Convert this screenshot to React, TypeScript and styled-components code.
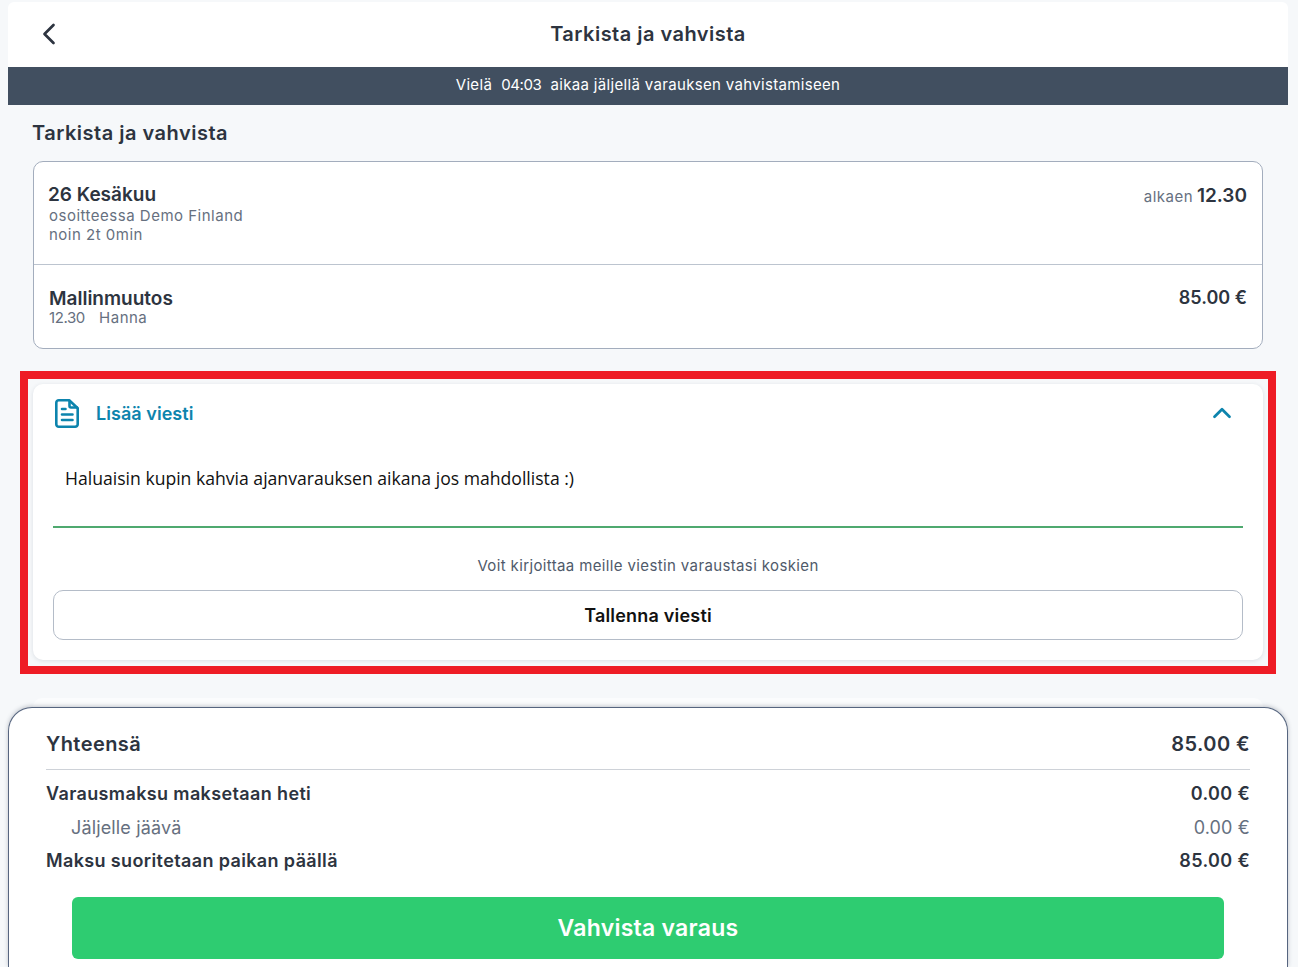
import styled, { createGlobalStyle } from 'styled-components';
import { ChevronLeft, ChevronUp } from 'lucide-react';

const GlobalStyle = createGlobalStyle`
    html, body {
        margin: 0;
        padding: 0;
        height: 967px;
        overflow: hidden;
        background: #f6f8fa;
    }
    body {
        font-family: 'Inter', 'Liberation Sans', sans-serif;
        color: #2d3440;
    }
    * {
        box-sizing: border-box;
    }
`;

const DocIcon = () => (
    <svg width="24" height="29" viewBox="0 0 24 29" fill="none" stroke="#0d84ad" strokeWidth="2.6" strokeLinejoin="round" strokeLinecap="round">
        <path d="M3.8 1.3h10.4l8.5 8v15.9a2.5 2.5 0 0 1-2.5 2.5H3.8a2.5 2.5 0 0 1-2.5-2.5V3.8a2.5 2.5 0 0 1 2.5-2.5z" />
        <path d="M14.5 2v5a1.5 1.5 0 0 0 1.5 1.5h6" />
        <path d="M7 10h3.5M7 15.5h10.5M7 21h10.5" />
    </svg>
);

export default function App() {
    return (
        <Page>
            <GlobalStyle />
            <TopBar>
                <BackButton>
                    <ChevronLeft size={36} strokeWidth={1.8} />
                </BackButton>
                <TopTitle>Tarkista ja vahvista</TopTitle>
            </TopBar>
            <TimerBanner>
                Vielä&nbsp; <Digits>04:03</Digits>&nbsp; aikaa jäljellä varauksen vahvistamiseen
            </TimerBanner>

            <Content>
                <SectionTitle>Tarkista ja vahvista</SectionTitle>
                <SummaryCard>
                    <SummaryRow $height={102} $pad={2}>
                        <div>
                            <DateLine>26 Kesäkuu</DateLine>
                            <Muted>osoitteessa Demo Finland</Muted>
                            <Muted>noin 2t 0min</Muted>
                        </div>
                        <StartTime>
                            <small>alkaen</small> 12.30
                        </StartTime>
                    </SummaryRow>
                    <SummaryRow $height={84} $pad={2}>
                        <div>
                            <ServiceName>Mallinmuutos</ServiceName>
                            <Muted>
                                <Digits>12.30</Digits> &nbsp; Hanna
                            </Muted>
                        </div>
                        <Price>85.00 €</Price>
                    </SummaryRow>
                </SummaryCard>
            </Content>

            <Highlight>
                <MessageCard>
                    <MessageHeader>
                        <DocIcon />
                        <MessageTitle>Lisää viesti</MessageTitle>
                        <Chevron>
                            <ChevronUp size={30} strokeWidth={2.2} />
                        </Chevron>
                    </MessageHeader>
                    <MessageField>Haluaisin kupin kahvia ajanvarauksen aikana jos mahdollista :)</MessageField>
                    <Hint>Voit kirjoittaa meille viestin varaustasi koskien</Hint>
                    <SaveButton>Tallenna viesti</SaveButton>
                </MessageCard>
            </Highlight>

            <NextCardEdge />

            <TotalsPanel>
                <TotalRow>
                    <span>Yhteensä</span>
                    <span>85.00 €</span>
                </TotalRow>
                <PayRow $top={13}>
                    <span>Varausmaksu maksetaan heti</span>
                    <span>0.00 €</span>
                </PayRow>
                <RemainRow>
                    <span>Jäljelle jäävä</span>
                    <span>0.00 €</span>
                </RemainRow>
                <PayRow $top={0}>
                    <span>Maksu suoritetaan paikan päällä</span>
                    <span>85.00 €</span>
                </PayRow>
                <ConfirmButton>Vahvista varaus</ConfirmButton>
            </TotalsPanel>
        </Page>
    );
}

const Page = styled.div`
    display: flex;
    flex-direction: column;
    height: 967px;
    padding: 2px 10px 0 8px;
    overflow: hidden;
`;

const TopBar = styled.header`
    display: grid;
    grid-template-columns: 1fr auto 1fr;
    align-items: center;
    flex: none;
    height: 65px;
    padding: 0 23px 1px;
    background: #fff;
    border-radius: 6px 6px 0 0;
`;

const BackButton = styled.div`
    display: flex;
    color: #2d3440;
`;

const TopTitle = styled.h1`
    margin: 0;
    font-size: 20px;
    letter-spacing: 0.48px;
    font-weight: 600;
`;

const TimerBanner = styled.div`
    flex: none;
    height: 38px;
    line-height: 36px;
    text-align: center;
    background: #414f60;
    color: #fff;
    font-size: 15px;
    letter-spacing: 0.33px;
`;

const Digits = styled.span`
    letter-spacing: -0.4px;
`;

const Content = styled.section`
    flex: none;
    padding: 0 25px 0 24px;
`;

const SectionTitle = styled.h2`
    margin: 0;
    padding: 17px 0 16px;
    font-size: 20px;
    line-height: 23px;
    font-weight: 600;
    letter-spacing: 0.5px;
`;

const SummaryCard = styled.div`
    margin-left: 1px;
    background: #fff;
    border: 1px solid #a3adbd;
    border-radius: 10px;
`;

const SummaryRow = styled.div<{ $height: number; $pad: number }>`
    display: flex;
    align-items: center;
    justify-content: space-between;
    height: ${(p) => p.$height}px;
    padding: ${(p) => p.$pad}px 15px 0;

    & + & {
        border-top: 1px solid #bcc4cf;
    }
`;

const DateLine = styled.div`
    margin-left: -1px;
    font-size: 19px;
    line-height: 22px;
    font-weight: 600;
`;

const ServiceName = styled.div`
    font-size: 19px;
    line-height: 19px;
    font-weight: 600;
`;

const Muted = styled.div`
    font-size: 15px;
    line-height: 19px;
    letter-spacing: 0.5px;
    color: #667080;
`;

const StartTime = styled.div`
    align-self: flex-start;
    margin-top: 20px;
    font-size: 19px;
    font-weight: 600;

    small {
        margin-right: -1px;
        font-size: 15px;
        font-weight: 400;
        letter-spacing: 0.5px;
        color: #667080;
    }
`;

const Price = styled.div`
    align-self: flex-start;
    margin-top: 20px;
    font-size: 18px;
    font-weight: 600;
`;

const Highlight = styled.div`
    flex: none;
    margin: 22px 12px 0;
    padding: 5px 5px 6px;
    height: 303px;
    border: 8px solid #ee1c25;
    background: #f6f8fa;
`;

const MessageCard = styled.div`
    height: 100%;
    padding: 0 20px;
    background: #fff;
    border-radius: 10px;
    box-shadow: 0 1px 4px rgba(60, 70, 90, 0.14);
`;

const MessageHeader = styled.div`
    display: flex;
    align-items: center;
    height: 58px;
    padding-left: 2px;
    gap: 17px;
`;

const MessageTitle = styled.span`
    flex: 1;
    color: #0d84ad;
    font-size: 18px;
    letter-spacing: 0.05px;
    font-weight: 600;
`;

const Chevron = styled.div`
    display: flex;
    margin-right: 6px;
    color: #0d84ad;
`;

const MessageField = styled.div`
    height: 86px;
    padding: 23px 12px 0;
    border-bottom: 2px solid #4fa96f;
    color: #111;
    font-family: 'Open Sans', sans-serif;
    font-size: 17.6px;
    line-height: 26px;
`;

const Hint = styled.div`
    margin-top: 28px;
    text-align: center;
    color: #4f5a6a;
    font-size: 15px;
    line-height: 20px;
    letter-spacing: 0.37px;
`;

const SaveButton = styled.div`
    display: flex;
    align-items: center;
    justify-content: center;
    height: 50px;
    margin-top: 14px;
    border: 1px solid #b4bcc8;
    border-radius: 10px;
    font-size: 18px;
    letter-spacing: 0.2px;
    font-weight: 600;
    color: #111;
`;

const NextCardEdge = styled.div`
    flex: none;
    height: 9px;
    margin: 24px 25px 0;
    background: #fbfcfd;
    border-radius: 10px 10px 0 0;
`;

const TotalsPanel = styled.footer`
    flex: 1;
    padding: 0 37px;
    background: #fff;
    border: 1px solid #56657f;
    border-bottom: 0;
    border-radius: 24px 24px 0 0;
    box-shadow: 0 -1px 4px rgba(60, 70, 90, 0.3);
`;

const TotalRow = styled.div`
    display: flex;
    justify-content: space-between;
    align-items: center;
    height: 62px;
    padding-top: 10px;
    border-bottom: 1px solid #ced2d8;
    font-size: 20px;
    letter-spacing: 0.42px;
    font-weight: 600;
`;

const PayRow = styled.div<{ $top: number }>`
    display: flex;
    justify-content: space-between;
    margin-top: ${(p) => p.$top}px;
    font-size: 18px;
    line-height: 22px;
    letter-spacing: 0.37px;
    font-weight: 600;
`;

const RemainRow = styled.div`
    display: flex;
    justify-content: space-between;
    padding: 12px 0 11px 25px;
    font-size: 18px;
    line-height: 22px;
    letter-spacing: 0.15px;
    color: #667080;
`;

const ConfirmButton = styled.div`
    display: flex;
    align-items: center;
    justify-content: center;
    height: 62px;
    margin: 25px 26px 0;
    background: #2ecc71;
    border-radius: 6px;
    color: #fff;
    font-size: 23px;
    letter-spacing: 0.25px;
    font-weight: 600;
`;
